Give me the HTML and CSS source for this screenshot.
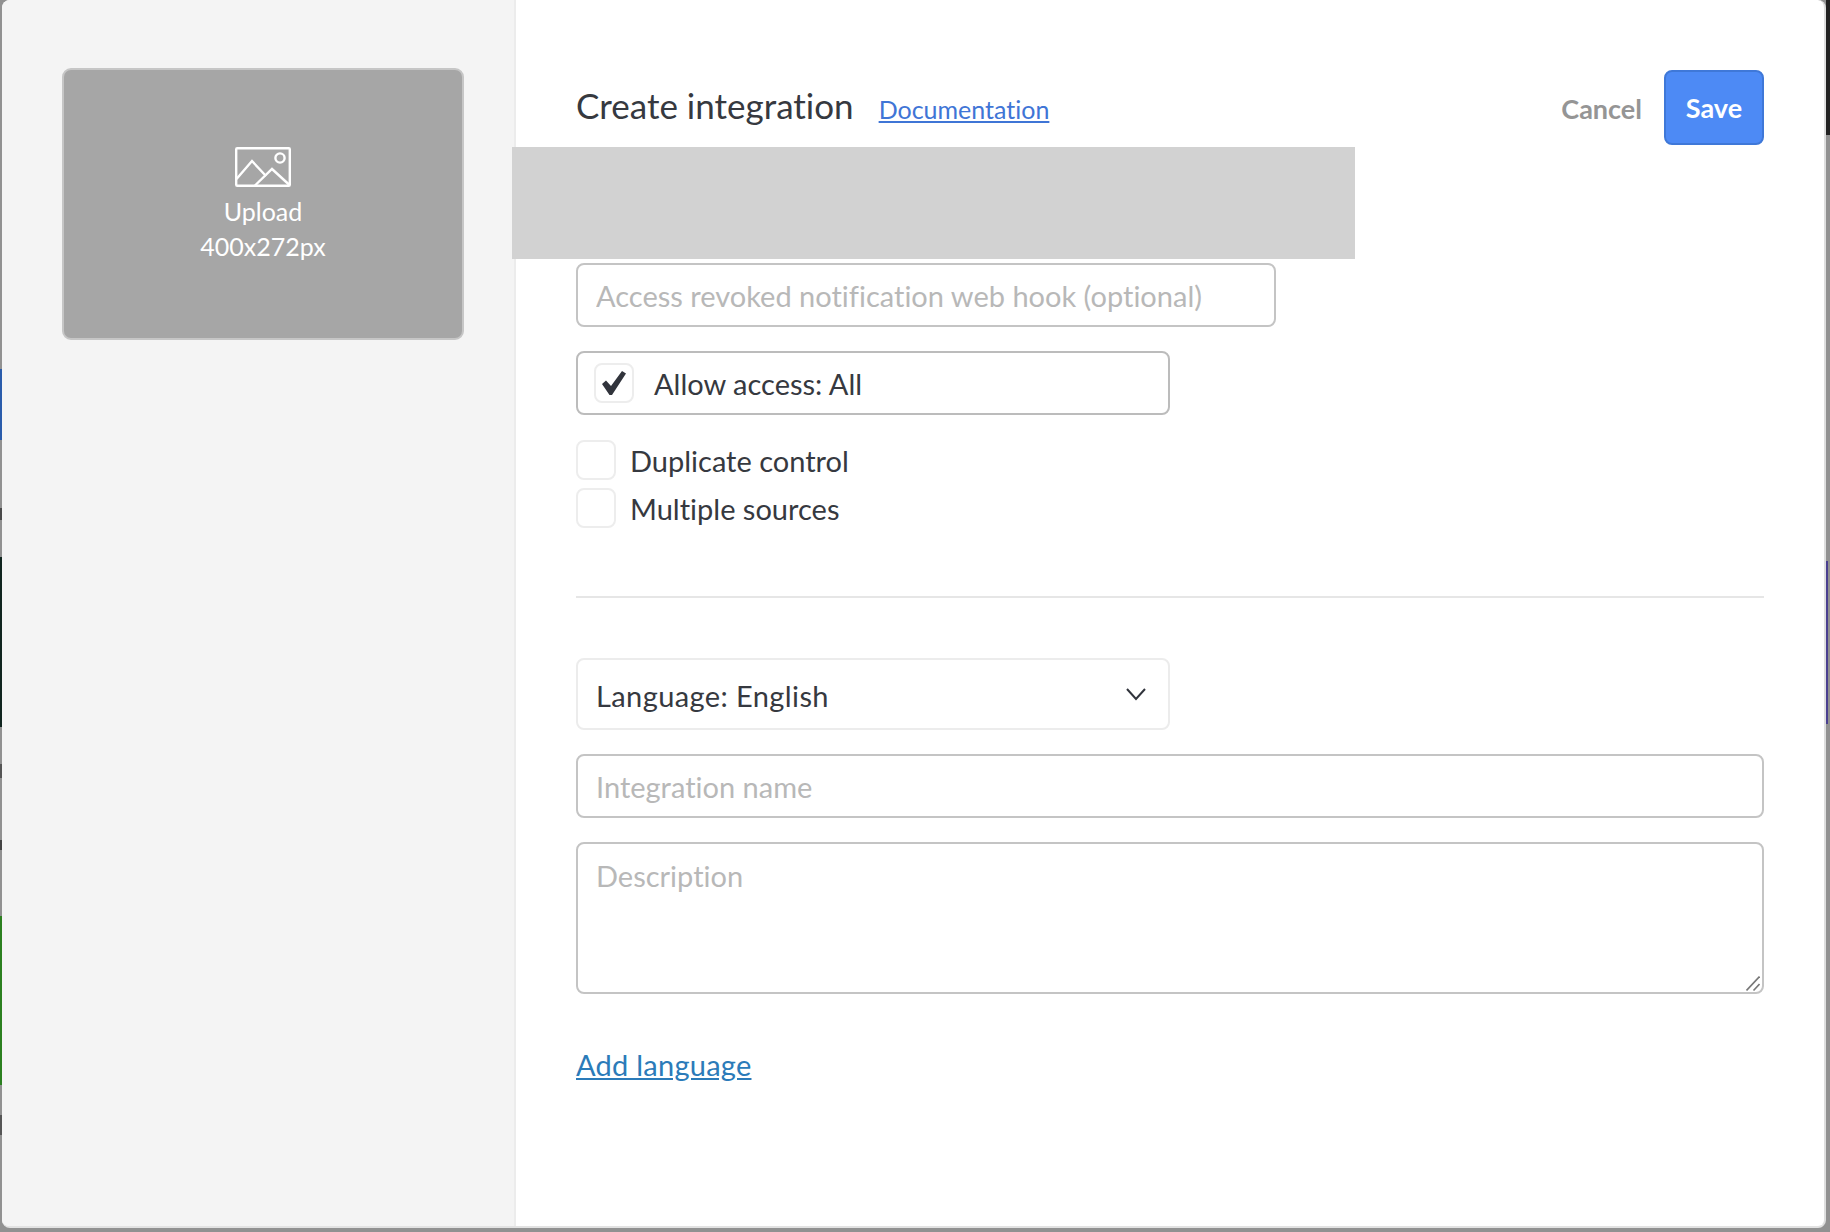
FILE: index.html
```html
<!DOCTYPE html>
<html lang="en">
<head>
    <meta charset="UTF-8">
    <meta name="viewport" content="width=device-width, initial-scale=1.0">
    <title>Create integration</title>
    <link rel="stylesheet" href="styles.css">
</head>
<body>

    <div class="edge edge-left">
        <div class="strip strip-blue"></div>
        <div class="strip strip-mark-a"></div>
        <div class="strip strip-dark"></div>
        <div class="strip strip-mark-b"></div>
        <div class="strip strip-mark-c"></div>
        <div class="strip strip-green"></div>
        <div class="strip strip-mark-d"></div>
    </div>

    <div class="modal">
        <div class="sidebar">
            <div class="upload">
                <svg class="upload-icon" width="56" height="40" viewBox="0 0 56 40" fill="none" stroke="#fff" stroke-width="2.4">
                    <rect x="1.2" y="1.2" width="53.6" height="37.6" rx="1"/>
                    <circle cx="45" cy="11" r="4.6"/>
                    <path d="M1.5 32 L17 14 L31 29"/>
                    <path d="M20 38.5 L37 22 L54.5 38"/>
                </svg>
                <span>Upload</span>
                <span>400x272px</span>
            </div>
        </div>

        <div class="main-content">
            <div class="header">
                <h1>Create integration</h1>
                <a class="doc-link" href="#">Documentation</a>
                <a class="cancel" href="#">Cancel</a>
                <button class="btn-save">Save</button>
            </div>

            <input class="field field-hook" type="text" placeholder="Access revoked notification web hook (optional)">

            <div class="allow-box">
                <span class="check">
                    <svg width="26" height="26" viewBox="0 0 26 26">
                        <path d="M1 14 L5 10.5 L10 16 L21 1 L25 3.5 L11 25 L8.5 25 Z" fill="#31343c"/>
                    </svg>
                </span>
                <span class="allow-label">Allow access: All</span>
            </div>

            <label class="option option-first">
                <span class="check"></span>
                <span>Duplicate control</span>
            </label>
            <label class="option">
                <span class="check"></span>
                <span>Multiple sources</span>
            </label>

            <hr class="divider">

            <div class="select">
                <span class="select-text">Language: English</span>
                <svg width="22" height="14" viewBox="0 0 22 14" fill="none" stroke="#31343c" stroke-width="2">
                    <path d="M2 2 L11 12 L20 2"/>
                </svg>
            </div>

            <input class="field field-name" type="text" placeholder="Integration name">
            <div class="desc-wrap">
                <textarea class="field field-desc" placeholder="Description"></textarea>
                <svg class="resize-handle" width="14" height="15" viewBox="0 0 14 15" fill="none" stroke="#777" stroke-width="1.6">
                    <path d="M0.5 14.5 L13.5 0.5"/>
                    <path d="M7.5 14.5 L13.5 8"/>
                </svg>
            </div>

            <a class="add-language" href="#">Add language</a>
        </div>

        <div class="redacted"></div>
    </div>

    <div class="edge edge-right">
        <div class="strip strip-black"></div>
        <div class="strip strip-purple"></div>
    </div>

</body>
</html>
```

FILE: styles.css
```css
* {
    box-sizing: border-box;
}
body {
    margin: 0;
    height: 1232px;
    overflow: hidden;
    display: flex;
    align-items: flex-start;
    background-color: #919191;
    font-family: "Lato", sans-serif;
    font-variant-ligatures: none;
    color: #363940;
}
.edge {
    display: flex;
    flex-direction: column;
    flex: none;
}
.edge-left {
    width: 2px;
}
.edge-right {
    width: 4px;
}
.strip {
    width: 100%;
}
.strip-blue {
    height: 71px;
    margin-top: 369px;
    background-color: #2a5cab;
}
.strip-mark-a {
    height: 12px;
    margin-top: 68px;
    background-color: #4a4a4a;
}
.strip-dark {
    height: 170px;
    margin-top: 37px;
    background-color: #10251f;
}
.strip-mark-b {
    height: 14px;
    margin-top: 37px;
    background-color: #555;
}
.strip-mark-c {
    height: 10px;
    margin-top: 62px;
    background-color: #444;
}
.strip-green {
    height: 169px;
    margin-top: 66px;
    background-color: #2c8020;
}
.strip-mark-d {
    height: 20px;
    margin-top: 30px;
    background-color: #555;
}
.strip-black {
    height: 135px;
    background-color: #222;
}
.strip-purple {
    width: 2px;
    height: 163px;
    margin-top: 426px;
    background-color: #4a4090;
}

.modal {
    position: relative;
    flex: 1;
    height: 1228px;
    display: flex;
    background-color: #fff;
    border-right: 2px solid #dedede;
    border-bottom: 2px solid #e2e2e2;
    border-radius: 8px;
    overflow: hidden;
}
.sidebar {
    width: 514px;
    flex: none;
    padding: 68px 0 0 60px;
    background-color: #f4f4f4;
    border-right: 2px solid #ececec;
}
.upload {
    width: 402px;
    height: 272px;
    display: flex;
    flex-direction: column;
    align-items: center;
    padding-top: 77px;
    background-color: #a6a6a6;
    border: 2px solid #c6c6c6;
    border-radius: 9px;
    color: #fff;
    font-size: 25px;
    line-height: 35px;
}
.upload-icon {
    margin-bottom: 7px;
}

.main-content {
    flex: 1;
    padding: 70px 60px 0 60px;
    display: flex;
    flex-direction: column;
    align-items: flex-start;
}
.header {
    width: 100%;
    height: 75px;
    display: flex;
    align-items: center;
}
h1 {
    margin: -5px 25px 0 0;
    font-size: 35px;
    font-weight: 400;
    line-height: 72px;
}
.doc-link {
    margin-top: 3px;
    color: #3f75d6;
    font-size: 25px;
}
.cancel {
    margin: 2px 22px 0 auto;
    color: #959595;
    font-size: 27px;
    font-weight: 700;
    text-decoration: none;
}
.btn-save {
    width: 100px;
    height: 75px;
    padding: 0;
    background-color: #4d8af5;
    border: 2px solid #3f78d8;
    border-radius: 8px;
    color: #fff;
    font-family: inherit;
    font-size: 27px;
    font-weight: 700;
}

.field {
    display: block;
    padding: 0 18px;
    background-color: #fff;
    border: 2px solid #c4c4c4;
    border-radius: 8px;
    color: #363940;
    font-family: inherit;
    font-size: 29px;
    font-variant-ligatures: none;
    outline: none;
}
.field::placeholder {
    color: #b8b8b8;
    opacity: 1;
}
.field-hook {
    width: 700px;
    height: 64px;
    margin-top: 118px;
}
.field-name {
    width: 100%;
    height: 64px;
    margin-top: 24px;
}
.desc-wrap {
    position: relative;
    width: 100%;
    margin-top: 24px;
}
.field-desc {
    width: 100%;
    height: 152px;
    padding-top: 14px;
    line-height: 36px;
    resize: none;
}
.resize-handle {
    position: absolute;
    right: 4px;
    bottom: 3px;
}

.allow-box {
    width: 594px;
    height: 64px;
    margin-top: 24px;
    padding-left: 16px;
    display: flex;
    align-items: center;
    border: 2px solid #bcbcbc;
    border-radius: 8px;
}
.allow-label {
    margin-left: 20px;
    font-size: 29px;
}
.check {
    width: 40px;
    height: 40px;
    flex: none;
    display: flex;
    align-items: center;
    justify-content: center;
    background-color: #fff;
    border: 2px solid #ededed;
    border-radius: 8px;
}
.option {
    height: 40px;
    margin-top: 8px;
    display: flex;
    align-items: center;
    font-size: 29px;
}
.option-first {
    margin-top: 25px;
}
.option .check {
    margin-right: 14px;
}
.divider {
    width: 100%;
    height: 2px;
    margin: 68px 0 0 0;
    background-color: #e6e6e6;
    border: none;
}
.select {
    width: 594px;
    height: 72px;
    margin-top: 60px;
    padding: 0 21px 0 18px;
    display: flex;
    align-items: center;
    justify-content: space-between;
    border: 2px solid #ececec;
    border-radius: 8px;
    font-size: 29px;
    letter-spacing: 0.4px;
}
.select-text {
    margin-top: 2px;
}
.add-language {
    margin-top: 53px;
    color: #2b7bb9;
    font-size: 29px;
    letter-spacing: 0.25px;
}

/* grey block covering part of the form */
.redacted {
    position: absolute;
    left: 510px;
    top: 147px;
    width: 843px;
    height: 112px;
    background-color: #d2d2d2;
}
```
